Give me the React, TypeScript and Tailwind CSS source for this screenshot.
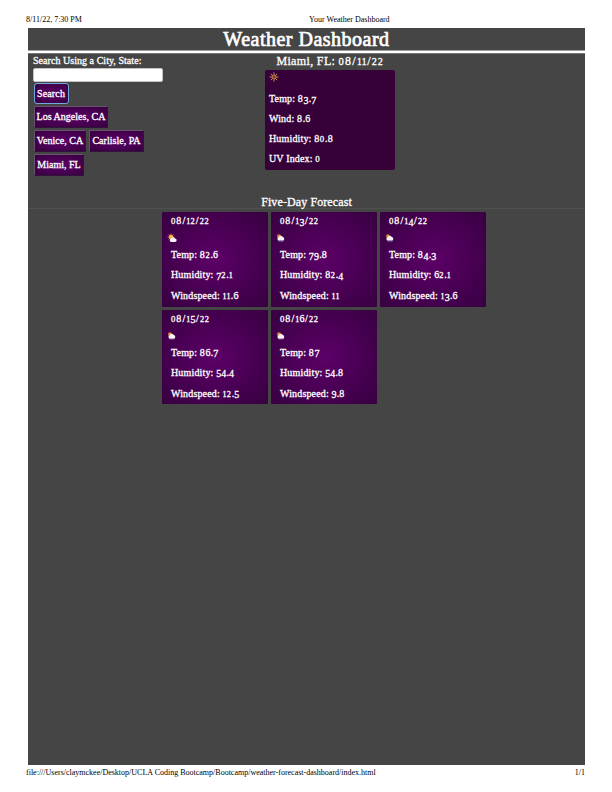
import React from 'react';

const glyphStyles: Record<string, string> = {
  '0': 'text-[0.88em] tracking-[0.1em]',
  '1': 'text-[0.8em] tracking-[0.03em]',
  '2': 'text-[0.84em] tracking-[0.08em]',
  '3': 'relative top-[0.15em]',
  '4': 'relative top-[0.15em]',
  '5': 'relative top-[0.15em]',
  '7': 'relative top-[0.15em]',
  '8': 'tracking-[0.07em]',
  '9': 'relative top-[0.15em]',
  '/': 'ml-[0.04em] tracking-[0.11em]',
};

// Sets figures in old style: low 0-2, descending 3-5, 7 and 9.
function OldStyle({ text }: { text: string }) {
  return (
    <>
      {text.split(/([0-9/])/).filter(Boolean).map((part, i) =>
        glyphStyles[part] ? <span key={i} className={glyphStyles[part]}>{part}</span> : <React.Fragment key={i}>{part}</React.Fragment>
      )}
    </>
  );
}

function SunIcon() {
  return (
    <svg viewBox="0 0 20 20" className="block h-[10px] w-[10px]" fill="none" stroke="#d49350" strokeWidth="1.9">
      <circle cx="10" cy="10" r="4.2" fill="#7a3c2c" />
      <path d="M10 1v4M10 15v4M1 10h4M15 10h4M3.6 3.6l2.8 2.8M13.6 13.6l2.8 2.8M16.4 3.6l-2.8 2.8M6.4 13.6l-2.8 2.8" />
    </svg>
  );
}

function CloudIcon({ sunny, rain }: { sunny?: boolean; rain?: boolean }) {
  return (
    <svg viewBox="0 0 20 20" className="block h-[10px] w-[10px]">
      {sunny ? (
        <g>
          <path d="M8 1v14M1 8h14M3 3l10 10M13 3L3 13" stroke="#d98b3e" strokeWidth="1.6" />
          <circle cx="8" cy="8" r="4.5" fill="#f2b04e" />
        </g>
      ) : (
        <circle cx="6" cy="6.5" r="4" fill="#d9853b" />
      )}
      <path
        d={sunny ? 'M8 18a3.4 3.4 0 0 1 0-6.6 4.5 4.5 0 0 1 8-.5A3.6 3.6 0 0 1 16.5 18z' : 'M5.5 15.5a3.7 3.7 0 0 1-.3-7 4.5 4.5 0 0 1 8.3-.3A3.8 3.8 0 0 1 14 15.5z'}
        fill="#f7f3f8"
      />
      {!sunny && <path d="M5 15.5h10" stroke={rain ? '#8e87b8' : '#c9a9cc'} strokeWidth="2" />}
      {rain && <path d="M7 16.5l-1 2M10.5 16.5l-1 2M14 16.5l-1 2" stroke="#6a62a0" strokeWidth="1.3" />}
    </svg>
  );
}

function CityButton({ label, className }: { label: string; className: string }) {
  return (
    <button
      className={`h-[22px] border border-t-[#69516e] border-l-[#69516e] border-r-[#30143a] border-b-[#30143a] bg-[radial-gradient(#5c0068,#380040)] text-center leading-[18px] tracking-[0.02px] whitespace-nowrap ${className}`}
    >
      {label}
    </button>
  );
}

type Day = { date: string; temp: string; humidity: string; wind: string; sunny?: boolean; rain?: boolean };

const days: Day[] = [
  { date: '08/12/22', temp: '82.6', humidity: '72.1', wind: '11.6', sunny: true },
  { date: '08/13/22', temp: '79.8', humidity: '82.4', wind: '11', rain: true },
  { date: '08/14/22', temp: '84.3', humidity: '62.1', wind: '13.6', rain: true },
  { date: '08/15/22', temp: '86.7', humidity: '54.4', wind: '12.5' },
  { date: '08/16/22', temp: '87', humidity: '54.8', wind: '9.8' },
];

function DayCard({ day }: { day: Day }) {
  return (
    <article className="h-[94.5px] w-[106px] rounded-[1px] bg-[radial-gradient(#5c0068,#370040)] pl-[9px] whitespace-nowrap">
      <div className="h-[21px] leading-[17px]"><OldStyle text={day.date} /></div>
      <div className="-ml-[4px] h-[12px]"><CloudIcon sunny={day.sunny} rain={day.rain} /></div>
      <div className="h-[20px] leading-[20px]"><OldStyle text={`Temp: ${day.temp}`} /></div>
      <div className="h-[20px] leading-[20px]"><OldStyle text={`Humidity: ${day.humidity}`} /></div>
      <div className="h-[20px] leading-[21px]"><OldStyle text={`Windspeed: ${day.wind}`} /></div>
    </article>
  );
}

export default function App() {
  return (
    <div className="flex h-[792px] w-[612px] flex-col bg-white font-['Liberation_Serif',serif] text-[8px] text-black">
      <div className="flex h-[28px] pt-[14px] pl-[26px] leading-[11px]">
        <span className="w-[283px]">8/11/22, 7:30 PM</span>
        <span>Your Weather Dashboard</span>
      </div>

      <div className="ml-[28px] h-[737px] w-[557px] bg-[#454545] text-[10px] tracking-[0.15px] text-white [-webkit-text-stroke:0.3px_white]">
        <header className="h-[22px] text-center text-[20px] leading-[23px] tracking-[0.5px] [-webkit-text-stroke:0.7px_white]">
          <h1>Weather Dashboard</h1>
        </header>
        <div className="h-[4px] border-y border-t-[#a0a0a0] border-b-[#777] bg-white" />

        <main>
          <div className="flex h-[141px]">
            <aside className="w-[190px] pl-[5px]">
              <div className="h-[14px] leading-[14px] tracking-[0.04px] whitespace-nowrap">Search Using a City, State:</div>
              <input aria-label="City" className="block h-[14px] w-[130px] rounded-[2px] border border-[#c4c4c4] bg-white" />
              <div className="flex flex-col gap-[2px] pt-[1px] pl-px">
                <button className="h-[21px] w-[35px] rounded-[3px] border border-[#6fa8dc] bg-[radial-gradient(#5c0068,#380040)] text-center leading-[18px]"><span className="-ml-px">Search</span></button>
                <CityButton label="Los Angeles, CA" className="w-[74px]" />
                <div className="flex gap-[3px]">
                  <CityButton label="Venice, CA" className="w-[52px]" />
                  <CityButton label="Carlisle, PA" className="w-[55px]" />
                </div>
                <CityButton label="Miami, FL" className="w-[50px]" />
              </div>
            </aside>
            <section className="ml-[47px] w-[130px]">
              <h2 className="h-[16px] text-center text-[12px] leading-[15px] tracking-[0.35px] whitespace-nowrap"><OldStyle text="Miami, FL: 08/11/22" /></h2>
              <div className="h-[100px] rounded-[2px] bg-[#360039] pt-[2px] pl-[4px]">
                <div className="h-[17px]"><SunIcon /></div>
                {['Temp: 83.7', 'Wind: 8.6', 'Humidity: 80.8', 'UV Index: 0'].map((line) => (
                  <div key={line} className="h-[20px] leading-[20px]"><OldStyle text={line} /></div>
                ))}
              </div>
            </section>
          </div>

          <h2 className="h-[14px] border-b border-[#505050] text-center text-[12px] leading-[14px] tracking-[0.1px]">Five-Day Forecast</h2>
          <section className="ml-[134px] grid w-[324px] grid-cols-3 gap-x-[3px] gap-y-[3px] pt-[3px]">
            {days.map((day) => <DayCard key={day.date} day={day} />)}
          </section>
        </main>
      </div>

      <footer className="flex h-[27px] justify-between pt-[2px] pr-[27px] pl-[26px] leading-[11px]">
        <span>file:///Users/claymckee/Desktop/UCLA Coding Bootcamp/Bootcamp/weather-forecast-dashboard/index.html</span>
        <span>1/1</span>
      </footer>
    </div>
  );
}
